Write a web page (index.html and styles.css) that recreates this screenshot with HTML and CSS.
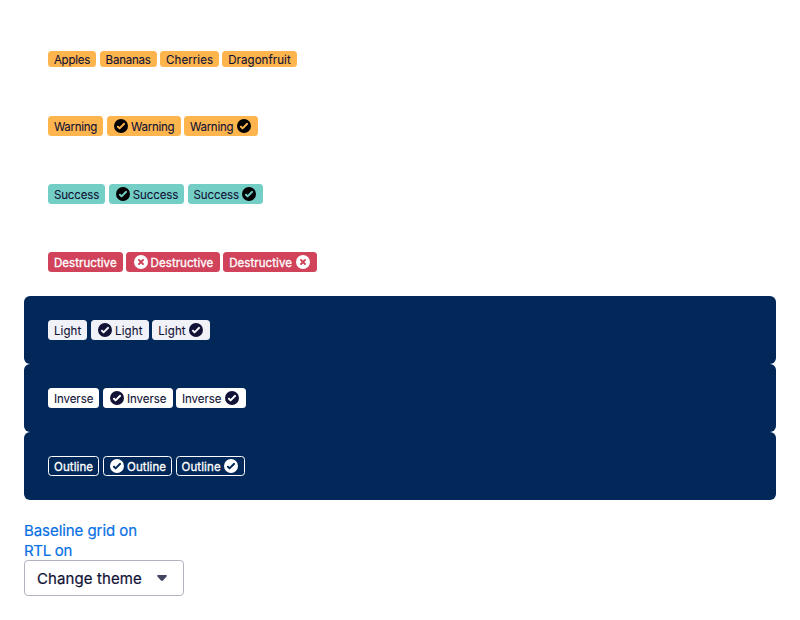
FILE: index.html
```
<!DOCTYPE html>
<html lang="en">
<head>
<meta charset="utf-8">
<title>Badges</title>
<link rel="stylesheet" href="styles.css">
</head>
<body>
<svg class="defs" aria-hidden="true">
  <symbol id="tick" viewBox="0 0 24 24"><path fill-rule="evenodd" d="M12 1.5a10.5 10.5 0 1 0 0 21 10.5 10.5 0 0 0 0-21zm5.8 8.2-6.9 6.9a1.5 1.5 0 0 1-2.1 0l-2.7-2.7a1.5 1.5 0 0 1 2.1-2.1l1.65 1.6 5.85-5.8a1.5 1.5 0 0 1 2.1 2.1z"/></symbol>
  <symbol id="cross" viewBox="0 0 24 24"><path fill-rule="evenodd" d="M12 1.5a10.5 10.5 0 1 0 0 21 10.5 10.5 0 0 0 0-21zm4.2 12.6a1.5 1.5 0 0 1-2.1 2.1L12 14.1l-2.1 2.1a1.5 1.5 0 0 1-2.1-2.1L9.9 12 7.8 9.9a1.5 1.5 0 0 1 2.1-2.1L12 9.9l2.1-2.1a1.5 1.5 0 0 1 2.1 2.1L14.1 12z"/></symbol>
</svg>
<main class="page">
  <section class="row row--list">
    <span class="badge badge--warning apples">Apples</span>
    <span class="badge badge--warning bananas">Bananas</span>
    <span class="badge badge--warning cherries">Cherries</span>
    <span class="badge badge--warning dragonfruit">Dragonfruit</span>
  </section>
  <section class="row warning">
    <span class="badge badge--warning">Warning</span>
    <span class="badge badge--warning badge--lead"><svg class="icon"><use href="#tick"/></svg>Warning</span>
    <span class="badge badge--warning badge--trail">Warning<svg class="icon"><use href="#tick"/></svg></span>
  </section>
  <section class="row success">
    <span class="badge badge--success">Success</span>
    <span class="badge badge--success badge--lead"><svg class="icon"><use href="#tick"/></svg>Success</span>
    <span class="badge badge--success badge--trail">Success<svg class="icon"><use href="#tick"/></svg></span>
  </section>
  <section class="row destructive">
    <span class="badge badge--destructive">Destructive</span>
    <span class="badge badge--destructive badge--lead"><svg class="icon"><use href="#cross"/></svg>Destructive</span>
    <span class="badge badge--destructive badge--trail">Destructive<svg class="icon"><use href="#cross"/></svg></span>
  </section>
  <section class="row row--dark light">
    <span class="badge badge--light">Light</span>
    <span class="badge badge--light badge--lead"><svg class="icon"><use href="#tick"/></svg>Light</span>
    <span class="badge badge--light badge--trail">Light<svg class="icon"><use href="#tick"/></svg></span>
  </section>
  <section class="row row--dark inverse">
    <span class="badge badge--inverse">Inverse</span>
    <span class="badge badge--inverse badge--lead"><svg class="icon"><use href="#tick"/></svg>Inverse</span>
    <span class="badge badge--inverse badge--trail">Inverse<svg class="icon"><use href="#tick"/></svg></span>
  </section>
  <section class="row row--dark outline">
    <span class="badge badge--outline">Outline</span>
    <span class="badge badge--outline badge--lead"><svg class="icon"><use href="#tick"/></svg>Outline</span>
    <span class="badge badge--outline badge--trail">Outline<svg class="icon"><use href="#tick"/></svg></span>
  </section>
  <footer class="controls">
    <a class="link">Baseline grid on</a>
    <a class="link link--rtl">RTL on</a>
    <button class="theme">Change theme<svg class="caret" viewBox="0 0 10 6"><path d="M1 0h8c.9 0 1.2.9.6 1.5L6 5.5c-.6.6-1.4.6-2 0L.4 1.5C-.2.9.1 0 1 0z"/></svg></button>
  </footer>
</main>
</body>
</html>
```
FILE: styles.css
```
* { box-sizing: border-box; }
body {
  margin: 0;
  background: #fff;
  color: #111236;
  font-family: Inter, "Liberation Sans", sans-serif;
}
.defs { display: none; }
.page { padding: 24px; }
.row {
  display: flex;
  align-items: center;
  gap: 3.5px;
  height: 68px;
  padding: 24px;
}
.row--list { padding-top: 26px; }
.row--dark { background: #022759; border-radius: 6px; }
.badge {
  display: flex;
  align-items: center;
  height: 20px;
  padding: 2px 0 0 5.9px;
  width: var(--w);
  flex: none;
  border-radius: 3.5px;
  font-size: 11.5px;
  line-height: 18px;
  white-space: nowrap;
  -webkit-text-stroke: .1px currentColor;
}
.row--list .badge { height: 16px; }
.badge--lead, .badge--trail { width: calc(var(--w) + 18.7px); }
.badge--lead { padding-left: 6.3px; }
.icon {
  width: 16px;
  height: 16px;
  margin-top: -2px;
  flex: none;
  fill: currentColor;
}
.badge--lead .icon { margin-right: 2px; }
.badge--trail .icon { margin-left: auto; margin-right: 6px; }
.badge--warning { background: #ffb54d; }
.badge--success { background: #73cec6; }
.badge--warning .icon, .badge--success .icon { fill: #000; }
.badge--destructive { background: #d1435b; color: #fff; -webkit-text-stroke: .3px #fff; }
.badge--light { background: #f1f2f8; }
.badge--inverse { background: #fff; }
.badge--outline {
  color: #fff;
  border: 1px solid #fff;
  padding: 2px 0 0 5px;
  -webkit-text-stroke: .3px #fff;
}
.badge--outline.badge--lead { padding-left: 5.3px; }
.badge--outline.badge--trail .icon { margin-right: 5px; }
.apples { --w: 48.2px; letter-spacing: -.22px; }
.bananas { --w: 57px; letter-spacing: -.2px; }
.cherries { --w: 58.6px; letter-spacing: .07px; }
.dragonfruit { --w: 74.8px; letter-spacing: .08px; }
.warning { --w: 55.2px; letter-spacing: -.27px; }
.success { --w: 57px; letter-spacing: -.12px; }
.destructive { --w: 74.8px; letter-spacing: .07px; }
.light { --w: 39.3px; letter-spacing: .12px; }
.inverse { --w: 51.2px; letter-spacing: -.05px; }
.outline { --w: 51px; gap: 3.7px; letter-spacing: .1px; }
.outline .badge--lead, .outline .badge--trail { width: 69.2px; }
.controls {
  display: flex;
  flex-direction: column;
  align-items: flex-start;
  padding-top: 20px;
}
.link {
  color: #0770e3;
  font-size: 15px;
  line-height: 20px;
  height: 20px;
  padding-top: 1px;
  letter-spacing: -.06px;
  -webkit-text-stroke: .2px #0770e3;
}
.link--rtl { letter-spacing: -.3px; }
.theme {
  display: flex;
  align-items: center;
  justify-content: space-between;
  width: 160px;
  height: 36px;
  padding: 1px 16px 0 12px;
  border: 1px solid #b2b2bf;
  border-radius: 4px;
  background: #fff;
  color: #111236;
  font: 15px Inter, "Liberation Sans", sans-serif;
  letter-spacing: .1px;
  -webkit-text-stroke: .2px #111236;
}
.caret { width: 10px; height: 6px; margin-top: -2px; fill: #444560; }
```
